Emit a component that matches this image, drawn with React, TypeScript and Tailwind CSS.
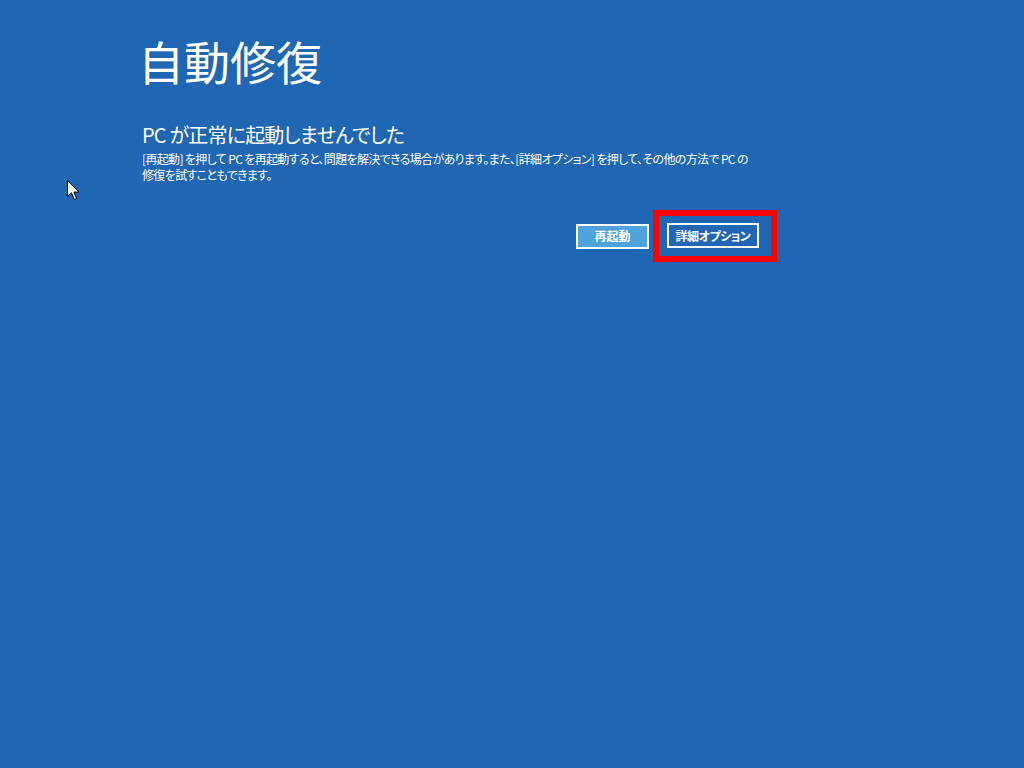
import React from "react";

const jp = "font-['Meiryo_UI','Noto_Sans_CJK_JP','Noto_Sans',sans-serif] [font-feature-settings:'palt']";

export default function App() {
  return (
    <div className={`relative w-[1024px] h-[768px] bg-[#1f66b3] text-white overflow-hidden ${jp}`}>
      <div className="flex flex-col pl-[142px] pt-[30px]">
        <h1 className="-ml-[4px] text-[46px] leading-[60px] font-normal">自動修復</h1>
        <h2 className="mt-[32px] text-[20px] leading-[26px] font-normal tracking-[-0.8px]">PC が正常に起動しませんでした</h2>
        <p className="mt-[3px] text-[12px] leading-[16px] whitespace-nowrap tracking-[-0.65px]">
          [再起動] を押して PC を再起動すると、問題を解決できる場合があります。また、[詳細オプション] を押して、その他の方法で PC の
          <br />
          修復を試すこともできます。
        </p>
        <div className="flex items-center w-[635px] justify-end mt-[27px] gap-[4px]">
          <button className="w-[73px] h-[25px] border-2 border-white bg-[#4ea3dc] text-[12px] font-bold leading-none">再起動</button>
          <div className="border-[6px] border-[#ff0000] pt-[7px] pb-[8px] pl-[8px] pr-[12px] flex">
            <button className="w-[92px] h-[25px] border-2 border-white bg-[#1f66b3] text-[12px] font-bold leading-none tracking-[-0.5px]">詳細オプション</button>
          </div>
        </div>
      </div>
      <svg className="absolute left-[67px] top-[180px]" width="14" height="21" viewBox="0 0 14 21">
        <path d="M0.5 0.5 L0.5 16.5 L4.5 12.8 L7.3 19.5 L9.6 18.5 L6.9 12 L12 12 Z" fill="#fff" stroke="#000" strokeWidth="1" strokeLinejoin="miter" />
      </svg>
    </div>
  );
}
